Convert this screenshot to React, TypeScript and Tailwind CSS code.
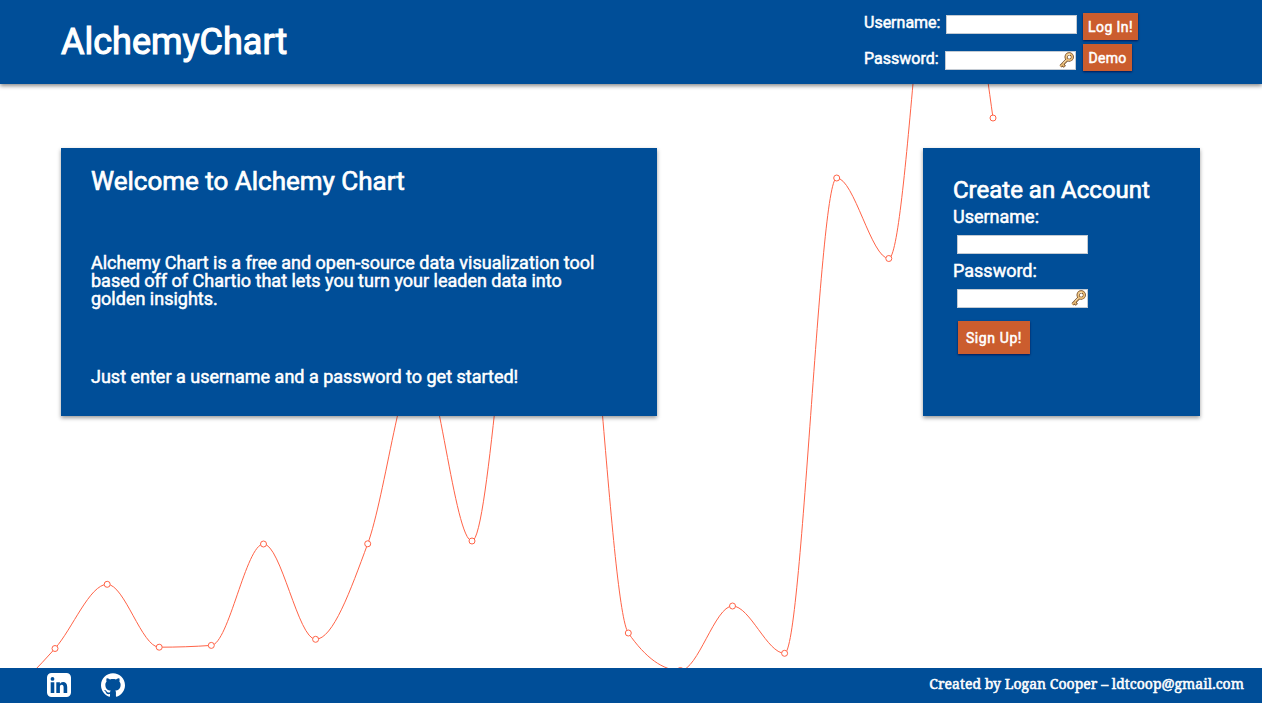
import React from "react";

type Point = [number, number];

const points: Point[] = [
  [3, 702], [55, 648.5], [107.2, 584.3], [159.2, 647.2], [211.3, 645.4],
  [263.5, 544], [315.6, 639.3], [367.7, 543.8], [419.8, 357], [472, 541],
  [524.1, 217], [576.2, 210], [628.3, 633], [680.4, 670.5], [732.5, 606],
  [784.6, 653.3], [836.7, 178], [888.8, 258.5], [940.9, -133], [993, 118],
];

// Monotone cubic interpolation through the data points.
function monotonePath(p: Point[]): string {
  const n = p.length;
  const s: number[] = [];
  for (let i = 0; i < n - 1; i++) s.push((p[i + 1][1] - p[i][1]) / (p[i + 1][0] - p[i][0]));
  const m: number[] = new Array(n).fill(0);
  for (let i = 1; i < n - 1; i++) {
    const a = s[i - 1];
    const b = s[i];
    m[i] = (Math.sign(a) + Math.sign(b)) * Math.min(Math.abs(a), Math.abs(b), 0.25 * Math.abs(a + b));
  }
  m[0] = (3 * s[0] - m[1]) / 2;
  m[n - 1] = (3 * s[n - 2] - m[n - 2]) / 2;
  let d = `M${p[0][0]},${p[0][1]}`;
  for (let i = 0; i < n - 1; i++) {
    const h = (p[i + 1][0] - p[i][0]) / 3;
    d += `C${p[i][0] + h},${p[i][1] + h * m[i]},${p[i + 1][0] - h},${p[i + 1][1] - h * m[i + 1]},${p[i + 1][0]},${p[i + 1][1]}`;
  }
  return d;
}

function Backdrop() {
  return (
    <svg className="absolute inset-0" width="1262" height="703" viewBox="0 0 1262 703">
      <path d={monotonePath(points)} fill="none" stroke="#ff6347" strokeWidth="1" />
      {points.map(([x, y]) => (
        <circle key={x} cx={x} cy={y} r="3" fill="#fff" stroke="#ff6347" strokeWidth="1" />
      ))}
    </svg>
  );
}

function KeyIcon() {
  return (
    <svg className="mr-px shrink-0" width="16" height="17" viewBox="0 0 16 17" fill="none">
      <path d="M9.2 7.6 2.6 14.4M4.6 12.4l2.2 2.4" stroke="#6b4423" strokeWidth="3" />
      <circle cx="11.2" cy="5" r="3.1" stroke="#6b4423" strokeWidth="3.2" />
      <path d="M9.2 7.6 2.2 14.6M4.8 12.6l1.6 1.8" stroke="#e9bd78" strokeWidth="1.5" />
      <circle cx="11.2" cy="5" r="3.1" stroke="#e9bd78" strokeWidth="1.6" />
      <circle cx="11.2" cy="5" r="1.5" fill="#fff" />
      <path d="M8.6 4.6a2.8 2.8 0 0 1 3.4-2.2M8.4 7.8l-3 3" stroke="#fff0c8" strokeWidth="0.8" />
    </svg>
  );
}

function Field({ withKey = false, label }: { withKey?: boolean; label: string }) {
  return (
    <div className="flex h-[19px] w-[131px] shrink-0 items-center border border-[#c4cbd3] bg-white">
      <input aria-label={label} type={withKey ? "password" : "text"} className="h-full min-w-0 flex-1 px-0.5 text-xs text-black outline-none" />
      {withKey && <KeyIcon />}
    </div>
  );
}

const button =
  "flex items-center justify-center whitespace-nowrap bg-[#cb5d2e] text-[14px] leading-none shadow-[0_1px_2px_rgba(0,0,60,0.7)]";

export default function App() {
  return (
    <div className="relative flex h-[703px] w-[1262px] flex-col overflow-hidden bg-white font-['Roboto',sans-serif] text-white [-webkit-text-stroke:0.5px_white]">
      <Backdrop />
      <header className="relative flex h-[84px] shrink-0 items-start justify-between bg-[#004e98] pl-[61px] pr-[124px] shadow-[0_2px_4px_rgba(0,0,0,0.45)]">
        <h1 className="pt-[20px] text-[36px] leading-[44px] [-webkit-text-stroke:1.1px_white]">AlchemyChart</h1>
        <form className="flex w-[274px] flex-col pt-[13px] text-[16px] leading-[19px]">
          <div className="flex h-[27px]">
            <label className="w-[82px]">Username:</label>
            <div className="pt-[2px]"><Field label="Username" /></div>
            <button type="button" className={`${button} ml-[6px] h-[27px] w-[55px] tracking-[0.4px]`}>Log In!</button>
          </div>
          <div className="mt-[4px] flex h-[27px]">
            <label className="w-[81px] pt-[5px]">Password:</label>
            <div className="pt-[7px]"><Field withKey label="Password" /></div>
            <button type="button" className={`${button} ml-[7px] h-[27px] w-[49px] tracking-[0.3px]`}>Demo</button>
          </div>
        </form>
      </header>

      <main className="relative flex flex-1 items-start justify-between pl-[61px] pr-[62px] pt-[64px]">
        <section className="h-[268px] w-[596px] bg-[#004e98] px-[30px] pt-[19px] shadow-[0_2px_4px_rgba(0,0,0,0.4)]">
          <h2 className="text-[26px] leading-[28px] [-webkit-text-stroke:0.7px_white]">Welcome to Alchemy Chart</h2>
          <p className="mt-[59px] whitespace-nowrap text-[18px] leading-[18px]">
            Alchemy Chart is a free and open-source data visualization tool<br />
            based off of Chartio that lets you turn your leaden data into<br />
            golden insights.
          </p>
          <p className="mt-[60px] whitespace-nowrap text-[18px] leading-[18px]">
            Just enter a username and a password to get started!
          </p>
        </section>
        <section className="h-[268px] w-[277px] bg-[#004e98] px-[30px] pt-[29px] shadow-[0_2px_4px_rgba(0,0,0,0.4)]">
          <h2 className="whitespace-nowrap text-[24px] leading-[26px] [-webkit-text-stroke:0.7px_white]">Create an Account</h2>
          <form className="flex flex-col items-start text-[18px] leading-[18px]">
            <label className="mt-[5px]">Username:</label>
            <div className="ml-[4px] mt-[9px]"><Field label="New username" /></div>
            <label className="mt-[8px]">Password:</label>
            <div className="ml-[4px] mt-[9px]"><Field withKey label="New password" /></div>
            <button type="button" className={`${button} ml-[5px] mt-[13px] h-[33px] w-[72px] tracking-[0.6px]`}>Sign Up!</button>
          </form>
        </section>
      </main>

      <footer className="relative flex h-[35px] shrink-0 items-start justify-between bg-[#004e98] pl-[47px] pr-[18px]">
        <div className="flex gap-[30px] pt-[5px]">
          <svg width="24" height="24" viewBox="0 0 24 24" fill="#fff">
            <path fillRule="evenodd" d="M4.5 0h15A4.5 4.5 0 0 1 24 4.5v15a4.5 4.5 0 0 1-4.5 4.5h-15A4.5 4.5 0 0 1 0 19.5v-15A4.5 4.5 0 0 1 4.5 0ZM3.7 9.3v10.8h3.6V9.3ZM5.5 4a1.9 1.9 0 1 0 0 3.8 1.9 1.9 0 0 0 0-3.8ZM9.3 9.3v10.8h3.6v-6c0-1.5.7-2.3 1.9-2.3s1.8.9 1.8 2.5v5.8h3.6v-6.2c0-3.2-1.7-4.8-4.1-4.8-1.7 0-2.6.9-3.2 1.8V9.3Z" />
          </svg>
          <svg width="24" height="24" viewBox="0 0 24 24" fill="#fff">
            <path d="M12 .297c-6.63 0-12 5.373-12 12 0 5.303 3.438 9.8 8.205 11.385.6.113.82-.258.82-.577 0-.285-.01-1.04-.015-2.04-3.338.724-4.042-1.61-4.042-1.61C4.422 18.07 3.633 17.7 3.633 17.7c-1.087-.744.084-.729.084-.729 1.205.084 1.838 1.236 1.838 1.236 1.07 1.835 2.809 1.305 3.495.998.108-.776.417-1.305.76-1.605-2.665-.3-5.466-1.332-5.466-5.93 0-1.31.465-2.38 1.235-3.22-.135-.303-.54-1.523.105-3.176 0 0 1.005-.322 3.3 1.23.96-.267 1.98-.399 3-.405 1.02.006 2.04.138 3 .405 2.28-1.552 3.285-1.23 3.285-1.23.645 1.653.24 2.873.12 3.176.765.84 1.23 1.91 1.23 3.22 0 4.61-2.805 5.625-5.475 5.92.42.36.81 1.096.81 2.22 0 1.606-.015 2.896-.015 3.286 0 .315.21.69.825.57C20.565 22.092 24 17.592 24 12.297c0-6.627-5.373-12-12-12" />
          </svg>
        </div>
        <p className="whitespace-nowrap pt-[7px] font-['Noto_Serif','Droid_Serif','DejaVu_Serif_Condensed','DejaVu_Serif',serif] text-[14px] leading-[18px] tracking-[0.035px]">
          Created by Logan Cooper – ldtcoop@gmail.com
        </p>
      </footer>
    </div>
  );
}
